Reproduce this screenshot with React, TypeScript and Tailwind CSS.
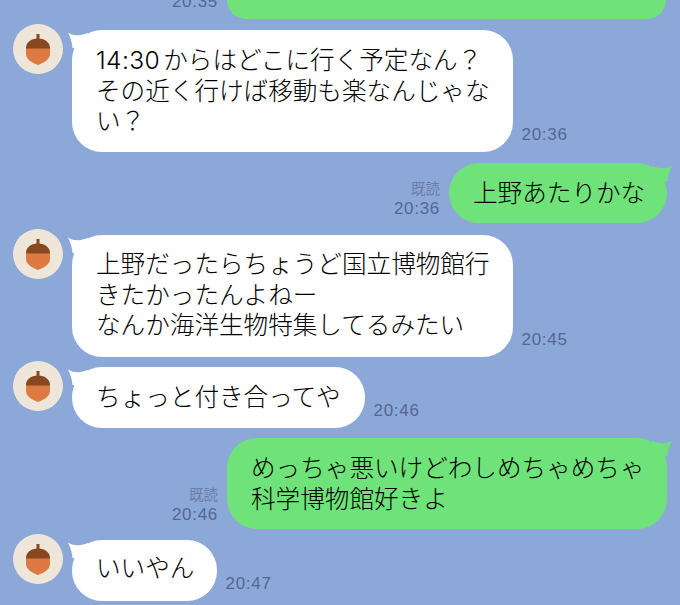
function Acorn() {
  return (
    <div className="w-[50px] h-[50px] rounded-full bg-[#efe6da] flex items-center justify-center shrink-0 self-start -mt-[6px]">
      <svg width="24" height="31" viewBox="0 0 24 31">
        <path d="M0 13.5 H24 V20 C24 26 17 29 12 31 C7 29 0 26 0 20 Z" fill="#dd7a42" />
        <path d="M10.5 0 H13.5 V4.4 C20 5 24 9 24 14 V14.5 H0 V14 C0 9 4 5 10.5 4.4 Z" fill="#87471f" />
      </svg>
    </div>
  );
}

function LeftTail() {
  return (
    <svg className="absolute -left-[4px] top-[2px]" width="24" height="20" viewBox="0 0 24 20">
      <path d="M0 0.5 C4 3 9 5 20 1 L18 18 L4.5 16 C4 9 2 5 0 0.5 Z" fill="#ffffff" />
    </svg>
  );
}

function RightTail() {
  return (
    <svg className="absolute -right-[5px] top-[2px]" width="24" height="20" viewBox="0 0 24 20">
      <path d="M24 0.5 C20 3 15 5 4 1 L6 18 L19.5 16 C20 9 22 5 24 0.5 Z" fill="#6fe37a" />
    </svg>
  );
}

function Time({ t }: { t: string }) {
  return <span className="text-[17px] leading-[20px] tracking-[0.7px] text-[#55678f]">{t}</span>;
}

function Left({ lines, width, time, mt, pt }: { lines: React.ReactNode[]; width: string; time: string; mt: string; pt: string }) {
  return (
    <div className={`flex items-start pl-[13px] gap-[9px] ${mt}`}>
      <Acorn />
      <div className="flex items-end gap-[8.5px]">
        <div className={`relative bg-white rounded-[30px] px-6 ${pt} text-[24.6px] font-light leading-[30.5px] whitespace-nowrap text-black ${width}`}>
          <LeftTail />
          <div className="relative">
            {lines.map((l, i) => (
              <div key={i}>{l}</div>
            ))}
          </div>
        </div>
        <div className="pb-[5px]">
          <Time t={time} />
        </div>
      </div>
    </div>
  );
}

function Right({ lines, width, time, mt }: { lines: string[]; width: string; time: string; mt: string }) {
  return (
    <div className={`flex items-end justify-end gap-[9px] pr-[13px] ${mt}`}>
      <div className="flex flex-col items-end pb-[4px]">
        <span className="text-[14.5px] leading-[20px] text-[#6c7ea6]">既読</span>
        <Time t={time} />
      </div>
      <div className={`relative bg-[#6fe37a] rounded-[30px] px-6 pt-[16px] pb-[14px] text-[24.6px] font-light leading-[30.5px] whitespace-nowrap text-black ${width}`}>
        <RightTail />
        <div className="relative">
          {lines.map((l, i) => (
            <div key={i}>{l}</div>
          ))}
        </div>
      </div>
    </div>
  );
}

export default function App() {
  return (
    <div
      className="w-[680px] h-[605px] overflow-hidden bg-[#8ca8d9] flex flex-col"
      style={{ fontFamily: '"Liberation Sans", "Noto Sans CJK JP", sans-serif' }}
    >
      <div className="flex items-end justify-end gap-[9px] pr-[14px] h-[19px] shrink-0">
        <div className="pb-[5px]">
          <Time t="20:35" />
        </div>
        <div className="w-[439px] h-[19px] bg-[#6fe37a] rounded-b-[26px]" />
      </div>
      <Left
        mt="mt-[11px]"
        pt="pt-[16px] pb-[14px]"
        width="w-[441px]"
        time="20:36"
        lines={[
          <><span className="font-['Inter'] tracking-[0.4px] leading-[20px]">14:30</span><span className="ml-[3px]">からはどこに行く予定なん？</span></>,
          "その近く行けば移動も楽なんじゃな",
          "い？",
        ]}
      />
      <Right mt="mt-[11px]" width="w-[218px]" time="20:36" lines={["上野あたりかな"]} />
      <Left
        mt="mt-[12px]"
        pt="pt-[15px] pb-[15px]"
        width="w-[441px]"
        time="20:45"
        lines={["上野だったらちょうど国立博物館行", "きたかったんよねー", "なんか海洋生物特集してるみたい"]}
      />
      <Left mt="mt-[10.5px]" pt="pt-[16px] pb-[14px]" width="w-[293px]" time="20:46" lines={["ちょっと付き合ってや"]} />
      <Right mt="mt-[10.5px]" width="w-[440px]" time="20:46" lines={["めっちゃ悪いけどわしめちゃめちゃ", "科学博物館好きよ"]} />
      <Left mt="mt-[11px]" pt="pt-[14px] pb-[16px]" width="w-[145px]" time="20:47" lines={["いいやん"]} />
    </div>
  );
}
